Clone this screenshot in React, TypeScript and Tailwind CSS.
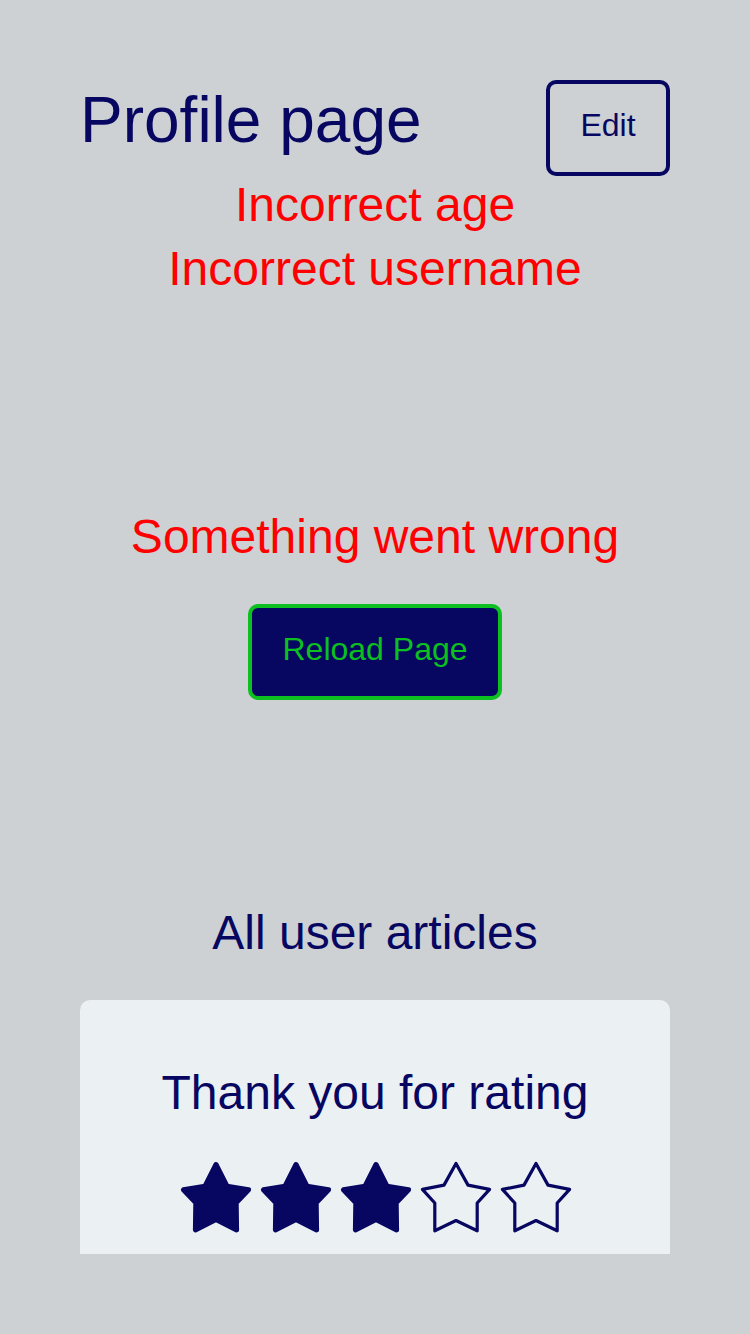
const NAVY = '#070761';

const FILLED = '40,7.5 51,29.2 72.6,32.7 60.2,45.8 60.6,72.9 40,62.5 19.4,72.9 19.8,45.8 7.4,32.7 29,29.2';
const OUTLINE = '40,6.5 52,28.1 73.6,32.4 61.2,46 61.2,73.8 40,63.5 18.8,73.8 18.8,46 6.4,32.4 28,28.1';

function Star({ filled }: { filled: boolean }) {
  return (
    <svg width="80" height="80" viewBox="-1 0 80 80" className="block">
      {filled ? (
        <polygon points={FILLED} fill={NAVY} stroke={NAVY} strokeWidth="5" strokeLinejoin="round" />
      ) : (
        <polygon points={OUTLINE} fill="none" stroke={NAVY} strokeWidth="3.2" strokeLinejoin="round" />
      )}
    </svg>
  );
}

export default function App() {
  const rating = 3;
  return (
    <div className="h-[1334px] bg-[#cdd1d4] p-[80px] font-['Liberation_Sans',Arial,sans-serif] text-[#070761]">
      <div className="h-full overflow-hidden">
        <header className="flex items-start justify-between">
          <h1 className="mt-[4px] text-[64px] leading-[72px]">Profile page</h1>
          <button className="flex h-[96px] w-[124px] items-center justify-center rounded-[10px] border-4 border-[#070761] pb-[6px] text-[32px] leading-none">
            Edit
          </button>
        </header>

        <div className="-mt-[3px] text-center text-[48px] leading-[64px] text-[#ff0000]">
          <p>Incorrect age</p>
          <p>Incorrect username</p>
        </div>

        <div className="mt-[204px] flex flex-col items-center">
          <p className="text-[48px] leading-[64px] text-[#ff0000]">Something went wrong</p>
          <button className="mt-[35px] flex h-[96px] w-[254px] items-center justify-center rounded-[10px] border-4 border-[#0bc01f] bg-[#070761] pb-[6px] text-[32px] leading-none text-[#0bc01f]">
            Reload Page
          </button>
        </div>

        <h2 className="mt-[201px] text-center text-[48px] leading-[64px]">All user articles</h2>

        <div className="mt-[35px] flex flex-col items-center rounded-[10px] bg-[#ebf0f3] pt-[61px] pb-[60px]">
          <p className="text-[48px] leading-[64px]">Thank you for rating</p>
          <div className="mt-[32px] flex">
            {[1, 2, 3, 4, 5].map((n) => (
              <Star key={n} filled={n <= rating} />
            ))}
          </div>
        </div>
      </div>
    </div>
  );
}
